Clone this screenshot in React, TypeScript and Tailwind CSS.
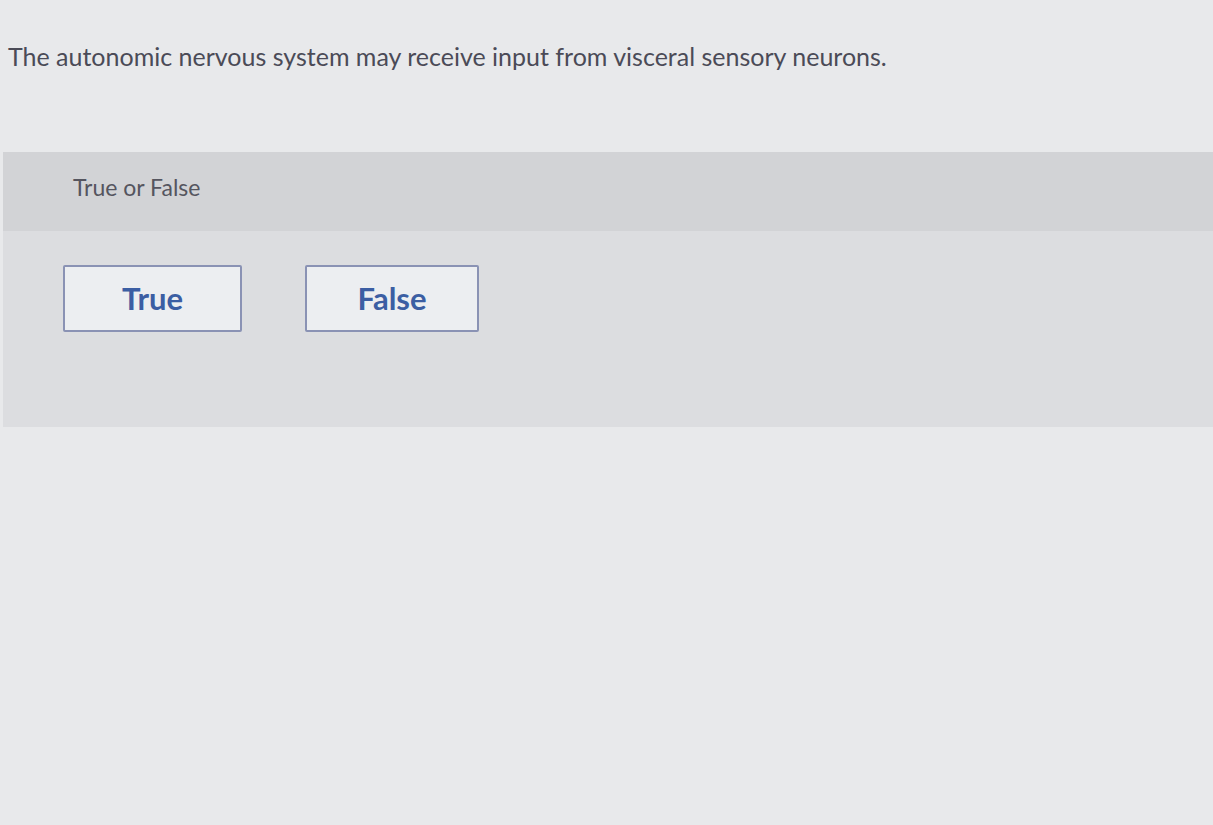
export default function App() {
  return (
    <div className="min-h-[825px] w-full bg-[#e8e9eb] font-['Lato','Liberation_Sans',sans-serif] pt-[40px]">
      <p className="px-[8px] text-[25px] leading-[32px] text-[#4b4b57]">
        The autonomic nervous system may receive input from visceral sensory neurons.
      </p>

      <div className="ml-[3px] mt-[80px] bg-[#dcdde0]">
        <div className="flex h-[79px] items-center bg-[#d2d3d6] pl-[70px] pb-[8px]">
          <span className="text-[23px] text-[#55555f]">True or False</span>
        </div>
        <div className="flex gap-[63px] pl-[60px] pt-[34px] pb-[95px]">
          <button className="h-[67px] w-[179px] rounded-[2px] border-2 border-[#8a92b4] bg-[#eceef1] text-[31px] font-bold text-[#3b5ea3]">
            True
          </button>
          <button className="h-[67px] w-[174px] rounded-[2px] border-2 border-[#8a92b4] bg-[#eceef1] text-[31px] font-bold text-[#3b5ea3]">
            False
          </button>
        </div>
      </div>
    </div>
  );
}
